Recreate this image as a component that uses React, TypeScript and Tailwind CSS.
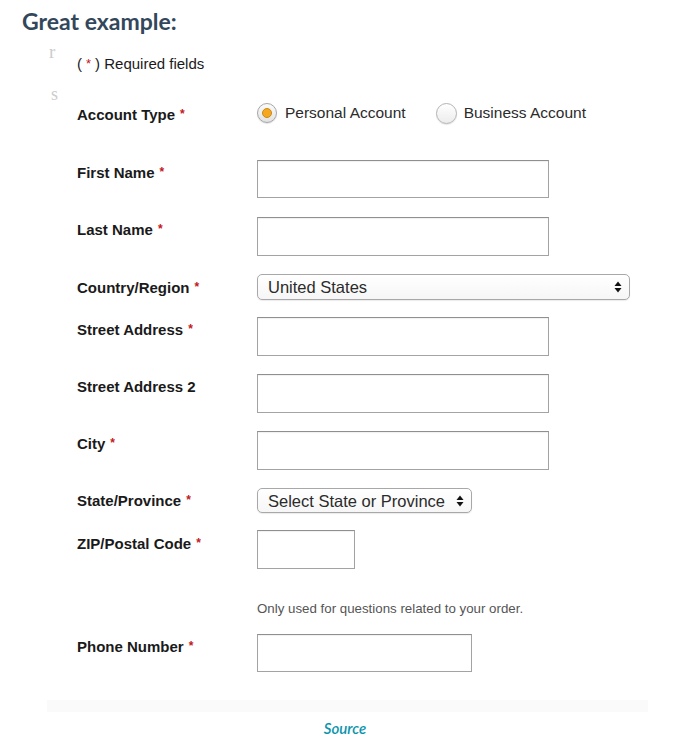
import React from "react";

const Req = () => (
  <span className="ml-[5px] text-[12px] leading-[12px] text-[#c4161c] relative -top-[2px]">*</span>
);

const Label = ({ text, req = true, pt = "pt-[4px]" }: { text: string; req?: boolean; pt?: string }) => (
  <div className={`w-[180px] shrink-0 ${pt} text-[15px] leading-[18px] font-bold text-[#1a1a1a]`}>
    {text}
    {req && <Req />}
  </div>
);

const Input = ({ w = "w-[292px]", h = "h-[38px]" }: { w?: string; h?: string }) => (
  <div className={`${w} ${h} border border-[#a3a3a3] border-t-[#8f8f8f] bg-white shadow-[inset_0_1px_1px_rgba(0,0,0,0.06)]`} />
);

const Arrows = () => (
  <svg width="8" height="12" viewBox="0 0 8 12">
    <path d="M4 0.5 L7.5 5 L0.5 5 Z" fill="#111" />
    <path d="M4 11.5 L7.5 7 L0.5 7 Z" fill="#111" />
  </svg>
);

const Select = ({ text, w, h }: { text: string; w: string; h: string }) => (
  <div
    className={`${w} ${h} flex items-center justify-between pl-[10px] pr-[7px] rounded-[5px] border border-[#a8a8a8] bg-gradient-to-b from-white to-[#f6f6f6] shadow-[0_1px_1px_rgba(0,0,0,0.08)] text-[16.5px] text-[#2b2b2b]`}
  >
    <span className="leading-[18px]">{text}</span>
    <Arrows />
  </div>
);

export default function App() {
  return (
    <div
      className="w-[675px] min-h-[755px] bg-white"
      style={{ fontFamily: '"Liberation Sans", Arial, sans-serif' }}
    >
      <h2
        className="pl-[22px] pt-[5px] text-[23px] leading-[32px] font-bold text-[#33475b]"
        style={{ fontFamily: "Lato, sans-serif" }}
      >
        Great example:
      </h2>

      <div className="ml-[47px] w-[601px] flex flex-col">
        {/* required fields row */}
        <div className="mt-[6px] flex h-[30px]">
          <div
            className="w-[30px] pl-[2px] text-[19px] leading-[18px] text-[#cdcdcd]"
            style={{ fontFamily: '"Liberation Serif", serif' }}
          >
            r
          </div>
          <div className="pt-[12px] text-[15px] leading-[18px] text-[#1a1a1a]">
            (<span className="text-[#c4161c] text-[13px] leading-[13px] mx-[4px] relative -top-[1px]">*</span>) Required fields
          </div>
        </div>

        <div className="mt-[13px] flex h-[17px]">
          <div
            className="w-[30px] pl-[4px] text-[18px] leading-[17px] text-[#cdcdcd]"
            style={{ fontFamily: '"Liberation Serif", serif' }}
          >
            s
          </div>
        </div>

        <div className="pl-[30px] flex flex-col">
          {/* Account type */}
          <div className="flex h-[22px]">
            <Label text="Account Type" pt="pt-[3px]" />
            <div className="flex items-center h-[20px] text-[15.5px] text-[#2b2b2b]">
              <div className="w-[20px] h-[20px] rounded-full border border-[#a6a6a6] bg-gradient-to-b from-[#fbfbfb] to-[#e2e2e2] shadow-[0_1px_1px_rgba(0,0,0,0.12)] flex items-center justify-center">
                <div className="w-[10px] h-[10px] rounded-full bg-[#f5a81f] border border-[#c98a16]" />
              </div>
              <span className="ml-[8px] leading-[18px]">Personal Account</span>
              <div className="ml-[30px] w-[21px] h-[21px] rounded-full border border-[#b3b3b3] bg-gradient-to-b from-white to-[#ececec] shadow-[0_1px_1px_rgba(0,0,0,0.1)]" />
              <span className="ml-[7px] leading-[18px]">Business Account</span>
            </div>
          </div>

          <div className="mt-[35px] flex">
            <Label text="First Name" />
            <Input />
          </div>

          <div className="mt-[19px] flex">
            <Label text="Last Name" />
            <Input h="h-[39px]" />
          </div>

          <div className="mt-[18px] flex">
            <Label text="Country/Region" pt="pt-[5px]" />
            <Select text="United States" w="w-[373px]" h="h-[26px]" />
          </div>

          <div className="mt-[17px] flex">
            <Label text="Street Address" pt="pt-[4px]" />
            <Input h="h-[39px]" />
          </div>

          <div className="mt-[18px] flex">
            <Label text="Street Address 2" req={false} />
            <Input h="h-[39px]" />
          </div>

          <div className="mt-[18px] flex">
            <Label text="City" />
            <Input h="h-[39px]" />
          </div>

          <div className="mt-[18px] flex">
            <Label text="State/Province" pt="pt-[4px]" />
            <Select text="Select State or Province" w="w-[215px]" h="h-[25px]" />
          </div>

          <div className="mt-[17px] flex">
            <Label text="ZIP/Postal Code" pt="pt-[5px]" />
            <Input w="w-[98px]" h="h-[39px]" />
          </div>

          <div className="mt-[32px] flex">
            <div className="w-[180px] shrink-0" />
            <div className="text-[13.3px] leading-[16px] text-[#555]">
              Only used for questions related to your order.
            </div>
          </div>

          <div className="mt-[17px] flex">
            <Label text="Phone Number" />
            <Input w="w-[215px]" h="h-[38px]" />
          </div>
        </div>

        <div className="mt-[28px] h-[12px] bg-[#fafafa]" />
      </div>

      <div
        className="mt-[7px] pl-[15px] text-center text-[15px] leading-[18px] italic font-semibold text-[#0a93ad]"
        style={{ fontFamily: "Lato, sans-serif" }}
      >
        Source
      </div>
    </div>
  );
}
